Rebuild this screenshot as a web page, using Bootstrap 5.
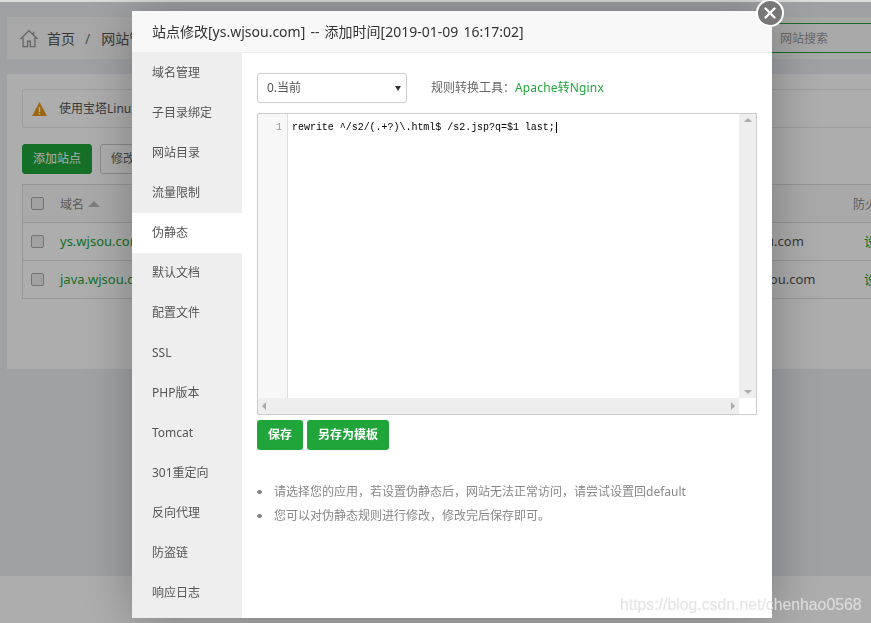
<!DOCTYPE html>
<html lang="zh">
<head>
<meta charset="utf-8">
<title>站点修改</title>
<link href="https://cdn.jsdelivr.net/npm/bootstrap@5.3.0/dist/css/bootstrap.min.css" rel="stylesheet">
<style>
html,body{height:100%;}
body{font-family:"Noto Sans","Noto Sans CJK SC",sans-serif;font-size:12px;color:#555;background:#eceef3;overflow:hidden;}
.pg{height:623px;width:871px;overflow:hidden;border-top:2px solid #dcdcdc;}
.crumb{margin:15px 0 15px 7px;height:42px;background:#f8f8f8;padding-left:12px;font-size:14px;width:864px;}
.crumb svg{width:20px;height:21px;}
.crumb .sep{margin:0 11px 0 10px;color:#777;}
.srch{height:30px;width:120px;border-top:1px solid #20a53a;border-bottom:1px solid #20a53a;margin-left:auto;padding-left:8px;margin-right:-21px;font-size:12px;color:#999;line-height:30px;}
.mainp{margin-left:7px;width:864px;height:295px;background:#fff;padding:15px;overflow:hidden;}
.notice{height:39px;width:900px;border:1px solid #e8e8e8;border-radius:2px;padding-left:9px;}
.notice svg{width:15px;height:14px;margin-right:12px;}
.gbtn{background:#20a53a;color:#fff;border:1px solid #20a53a;border-radius:3px;font-size:12px;line-height:1;padding:0 10px;height:30px;}
.wbtn{background:#fff;color:#666;border:1px solid #ccc;border-radius:3px;font-size:12px;height:30px;padding:0 10px;line-height:1;margin-left:8px;}
.acts{margin:16px 0 10px;}
.tbl{border:1px solid #ddd;border-bottom:0;width:900px;table-layout:fixed;font-size:13px;border-collapse:separate;border-spacing:0;}
.tbl td,.tbl th{border-bottom:1px solid #ddd;height:38px;padding:0;vertical-align:middle;font-weight:400;}
.tbl th{color:#888;font-size:12px;background:#fafafa;padding-top:3px;}
.tbl th .cbx{margin-top:-3px;}
.cbx{width:13px;height:13px;border:1px solid #aaa;background:#eee;border-radius:2px;display:block;margin-left:8px;}
.tbl a{color:#20a53a;text-decoration:none;}
.tbl .op{padding-left:11px;}
.tri{display:inline-block;border:6px solid transparent;border-top:0;border-bottom:6px solid #bbb;margin-left:4px;vertical-align:2px;}
.foot{background:#fff;height:60px;margin-top:207px;}
.shade{position:fixed;inset:2px 0 0 0;background:rgba(0,0,0,.32);}
.dlg{position:fixed;left:132px;top:11px;width:640px;height:607px;background:#fff;box-shadow:1px 1px 50px rgba(0,0,0,.3);}
.dlg-h{height:42px;background:#f8f8f8;border-bottom:1px solid #eee;padding-left:20px;font-size:14px;line-height:41px;color:#333;white-space:nowrap;word-spacing:1.5px;}
.dlg-b{height:565px;}
.side{width:110px;background:#eee;flex:none;}
.side div{height:40px;line-height:40px;padding-left:20px;color:#555;}
.side div.on{background:#fff;}
.cont{padding:20px 15px 0;flex:1;min-width:0;}
.sel{width:150px;height:30px;border:1px solid #ccc;border-radius:3px;padding:0 5px 0 9px;background:#fff;color:#555;}
.sel svg{width:6px;height:5px;margin-left:auto;}
.tool{margin-left:24px;color:#666;}
.tool a{color:#20a53a;text-decoration:none;letter-spacing:.15px;}
.edit{margin-top:10px;width:500px;height:302px;border:1px solid #ccc;}
.gut{width:30px;background:#f7f7f7;border-right:1px solid #ddd;text-align:right;padding:5px 5px 0 0;font-size:10px;color:#999;font-family:"Liberation Mono",monospace;line-height:17px;height:284px;}
.code{font-family:"Liberation Mono",monospace;font-size:10px;letter-spacing:-.03px;color:#000;line-height:17px;padding:5px 0 0 4px;white-space:pre;flex:1;height:284px;}
.caret{border-left:1px solid #000;margin-left:1px;}
.vbar{width:17px;background:#eee;height:284px;}
.hbar{height:16px;background:#eee;width:481px;}
.ar-u,.ar-d,.ar-l,.ar-r{width:0;height:0;border:4px solid transparent;}
.ar-u{border-top:0;border-bottom-color:#aaa;}
.ar-d{border-bottom:0;border-top-color:#aaa;}
.ar-l{border-left:0;border-right-color:#aaa;}
.ar-r{border-right:0;border-left-color:#aaa;}
.sv{background:#20a53a;color:#fff;border:0;border-radius:3px;height:30px;font-size:12px;font-weight:700;padding:0 11px;line-height:1;margin-right:4px;}
.btns{margin-top:5px;}
.tips{margin:30px 0 0;padding:0;list-style:none;color:#888;line-height:24px;}
.tips li{padding-left:17px;background:radial-gradient(circle 2.5px at 2.5px 12px,#888 98%,transparent) no-repeat;}
.xbtn{position:fixed;left:756px;top:-1px;width:28px;height:28px;border-radius:50%;background:#777;border:2px solid #fff;}
.xbtn svg{width:14px;height:14px;}
.wm{position:fixed;left:620px;top:593px;font-family:"Liberation Sans",sans-serif;font-size:15.8px;color:rgba(225,225,225,.8);text-shadow:0 0 1px rgba(225,225,225,.5);white-space:nowrap;}
</style>
</head>
<body>
<div class="pg">
  <div class="crumb d-flex align-items-center">
    <svg viewBox="0 0 22 22" fill="none" stroke="#999" stroke-width="1.5"><path d="M1.5 11.5 11 2.5l9.5 9M4.5 10v10h5v-6h3v6h5V10M16 3.5v3"/></svg>
    <span class="ms-2">首页</span><span class="sep">/</span><span>网站管理</span>
    <div class="srch">网站搜索</div>
  </div>
  <div class="mainp">
    <div class="notice d-flex align-items-center">
      <svg viewBox="0 0 15 14"><path d="M7.5 0 15 14H0z" fill="#e8991a"/><path d="M6.8 5h1.4v5H6.8zM6.8 11h1.4v1.4H6.8z" fill="#fff"/></svg>
      <span>使用宝塔Linux面板创建站点时会自动创建权限配置</span>
    </div>
    <div class="acts d-flex">
      <button class="gbtn">添加站点</button><button class="wbtn">修改默认页</button>
    </div>
    <table class="tbl">
      <colgroup><col style="width:37px"><col style="width:662px"><col style="width:131px"><col></colgroup>
      <tr><th><span class="cbx"></span></th><th>域名<i class="tri"></i></th><th></th><th>防火墙</th></tr>
      <tr><td><span class="cbx"></span></td><td><a href="#">ys.wjsou.com</a></td><td>ys.wjsou.com</td><td class="op"><a href="#">设置</a></td></tr>
      <tr><td><span class="cbx"></span></td><td><a href="#">java.wjsou.com</a></td><td>java.wjsou.com</td><td class="op"><a href="#">设置</a></td></tr>
    </table>
  </div>
  <div class="foot"></div>
</div>
<div class="shade"></div>
<div class="dlg">
  <div class="dlg-h">站点修改[ys.wjsou.com] -- 添加时间[2019-01-09 16:17:02]</div>
  <div class="dlg-b d-flex">
    <div class="side">
      <div>域名管理</div><div>子目录绑定</div><div>网站目录</div><div>流量限制</div><div class="on">伪静态</div><div>默认文档</div><div>配置文件</div><div>SSL</div><div>PHP版本</div><div>Tomcat</div><div>301重定向</div><div>反向代理</div><div>防盗链</div><div>响应日志</div>
    </div>
    <div class="cont">
      <div class="d-flex align-items-center">
        <div class="sel d-flex align-items-center"><span>0.当前</span><svg viewBox="0 0 6 5"><path d="M0 0h6L3 5z" fill="#333"/></svg></div>
        <span class="tool">规则转换工具：<a href="#">Apache转Nginx</a></span>
      </div>
      <div class="edit">
        <div class="d-flex">
          <div class="gut">1</div>
          <div class="code"><span>rewrite ^/s2/(.+?)\.html$ /s2.jsp?q=$1 last;</span><span class="caret"></span></div>
          <div class="vbar d-flex flex-column justify-content-between align-items-center py-1"><div class="ar-u"></div><div class="ar-d"></div></div>
        </div>
        <div class="hbar d-flex justify-content-between align-items-center px-1"><div class="ar-l"></div><div class="ar-r"></div></div>
      </div>
      <div class="btns d-flex"><button class="sv">保存</button><button class="sv">另存为模板</button></div>
      <ul class="tips">
        <li>请选择您的应用，若设置伪静态后，网站无法正常访问，请尝试设置回default</li>
        <li>您可以对伪静态规则进行修改，修改完后保存即可。</li>
      </ul>
    </div>
  </div>
</div>
<div class="xbtn d-flex align-items-center justify-content-center"><svg viewBox="0 0 14 14" stroke="#fff" stroke-width="2.4" stroke-linecap="round"><path d="M2.5 2.5l9 9M11.5 2.5l-9 9"/></svg></div>
<div class="wm">https://blog.csdn.net/chenhao0568</div>
<script src="https://cdn.jsdelivr.net/npm/bootstrap@5.3.0/dist/js/bootstrap.bundle.min.js"></script>
</body>
</html>
